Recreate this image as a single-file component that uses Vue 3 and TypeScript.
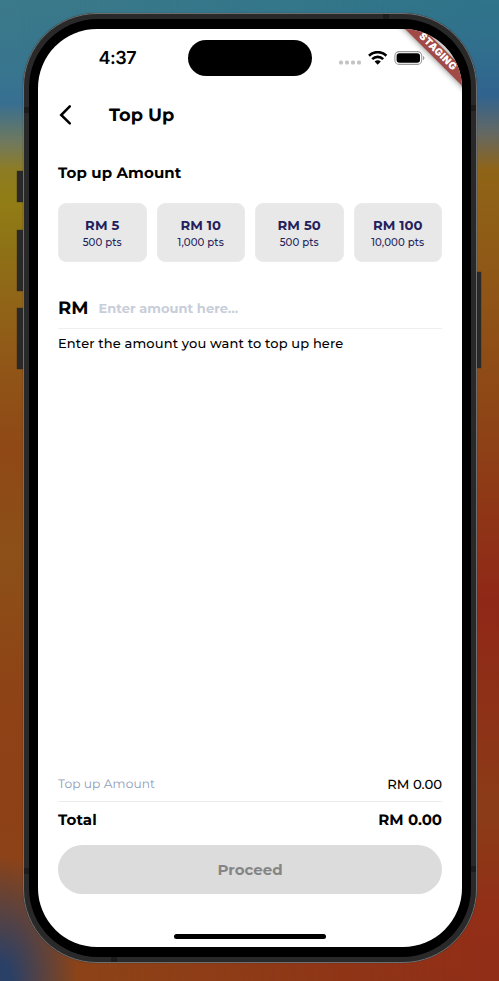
<script setup lang="ts">
import { ref } from 'vue'

interface Preset {
  amount: number
  points: string
}

const presets: Preset[] = [
  { amount: 5, points: '500' },
  { amount: 10, points: '1,000' },
  { amount: 50, points: '500' },
  { amount: 100, points: '10,000' },
]

const entered = ref('')
const total = ref('0.00')
</script>

<template>
  <div class="desktop">
    <i class="side action"></i>
    <i class="side volume-up"></i>
    <i class="side volume-down"></i>
    <i class="side power"></i>
    <div class="frame">
      <i class="seam left-top"></i>
      <i class="seam left-bottom"></i>
      <i class="seam right-top"></i>
      <i class="seam right-bottom"></i>
      <i class="seam top"></i>
      <i class="seam bottom"></i>
      <div class="bezel">
        <div class="screen">
          <header class="status">
            <span class="clock">4:37</span>
            <span class="island"></span>
            <span class="indicators">
              <svg class="cell" width="23" height="5" viewBox="0 0 23 5">
                <g fill="#c4c4c4">
                  <rect x="0" y="0.5" width="4" height="4" rx="1.6" />
                  <rect x="6" y="0.5" width="4" height="4" rx="1.6" />
                  <rect x="12" y="0.5" width="4" height="4" rx="1.6" />
                  <rect x="18" y="0.5" width="4" height="4" rx="1.6" />
                </g>
              </svg>
              <svg class="wifi" width="20" height="15" viewBox="0 0 20 15">
                <g fill="none" stroke="#000" stroke-width="2.6">
                  <path d="M1 4.7a12.4 12.4 0 0 1 17.4 0" />
                  <path d="M4.2 8.1a7.8 7.8 0 0 1 11 0" />
                </g>
                <path d="M6.6 10.6a4.4 4.4 0 0 1 6.2 0L9.7 13.7Z" />
              </svg>
              <svg class="battery" width="31" height="15" viewBox="0 0 31 15">
                <rect x="0.9" y="0.6" width="26.8" height="12.8" rx="4.2" fill="none" stroke="#999" stroke-width="1.1" />
                <rect x="2.6" y="2.2" width="23.4" height="9.6" rx="2.8" />
                <path d="M29 5c1.9.7 1.9 3.5 0 4.2Z" fill="#999" />
              </svg>
            </span>
          </header>
          <div class="banner">STAGING</div>

          <nav class="appbar">
            <svg width="14" height="22" viewBox="0 0 14 22">
              <path d="M11.8 2.4 3.2 11l8.6 8.4" fill="none" stroke="#000" stroke-width="2.5" stroke-linecap="round" />
            </svg>
            <h1>Top Up</h1>
          </nav>

          <main>
            <h2>Top up Amount</h2>
            <div class="presets">
              <button v-for="preset in presets" :key="preset.amount" class="preset">
                <strong>RM {{ preset.amount }}</strong>
                <span>{{ preset.points }} pts</span>
              </button>
            </div>
            <label class="field">
              <span class="currency">RM</span>
              <input v-model="entered" placeholder="Enter amount here..." />
            </label>
            <p class="hint">Enter the amount you want to top up here</p>
          </main>

          <footer>
            <div class="line">
              <span class="line-label">Top up Amount</span>
              <span class="line-value">RM {{ total }}</span>
            </div>
            <div class="total">
              <span class="total-label">Total</span>
              <span class="total-value">RM {{ total }}</span>
            </div>
            <button class="proceed"><span>Proceed</span></button>
            <div class="home"></div>
          </footer>
        </div>
      </div>
    </div>
  </div>
</template>

<style>
body {
  margin: 0;
}
</style>

<style scoped>
.desktop {
  position: relative;
  box-sizing: border-box;
  width: 499px;
  height: 981px;
  padding: 13px 22px 0 23px;
  overflow: hidden;
  font-family: Montserrat, Inter, 'Liberation Sans', sans-serif;
  text-rendering: geometricPrecision;
  color: #000;
  background:
    linear-gradient(180deg, #3b7a8a 0, #38758f 75px, #376f92 103px, #71795c 143px, #8d7c24 170px, #917d15 200px, #8e7116 250px, #906618 295px, #905417 375px, #8f4816 450px, #8c5018 555px, #8e4316 690px, #8e4016 800px, #8c4417 900px, #8c4717 981px);
}

.desktop::before {
  content: '';
  position: absolute;
  inset: 0;
  background:
    radial-gradient(ellipse 110px 60px at 170px 981px, #922f16, rgba(146, 47, 22, 0)),
    linear-gradient(180deg, #2f7489 0, #31708d 45px, #30638f 95px, #646863 133px, #8f6417 170px, #8f5c16 235px, #8f4d16 355px, #8e4016 450px, #902817 600px, #8e3017 700px, #8b3c17 810px, #932e17 920px, #902e17 981px);
  mask-image: linear-gradient(90deg, transparent 20px, #000 480px);
}

.desktop::after {
  content: '';
  position: absolute;
  inset: 0;
  background: radial-gradient(ellipse 78px 126px at 0 981px, #2b4066 15%, rgba(43, 64, 102, 0) 100%);
}

.frame {
  position: relative;
  z-index: 1;
  box-sizing: border-box;
  width: 454px;
  height: 950px;
  padding: 5px;
  border: 1px solid #6e6f70;
  border-radius: 74px;
  background: #292929;
  box-shadow: 0 0 1px #222;
}

.bezel {
  position: relative;
  box-sizing: border-box;
  width: 442px;
  height: 938px;
  padding: 10px 9px;
  border-radius: 69px;
  background: #000;
}

.screen {
  position: relative;
  display: flex;
  flex-direction: column;
  box-sizing: border-box;
  width: 424px;
  height: 918px;
  border-radius: 59px;
  overflow: hidden;
  background: #fff;
}

.side {
  position: absolute;
  width: 7px;
  background: #292929;
  box-shadow: 0 0 1px #222;
}
.action { left: 17px; top: 171px; height: 31px; }
.volume-up { left: 17px; top: 230px; height: 61px; }
.volume-down { left: 17px; top: 308px; height: 61px; }
.power { left: 475px; top: 272px; height: 96px; width: 6px; }

.seam {
  position: absolute;
  background: #1c1c1c;
}
.left-top, .left-bottom { left: 0; width: 5px; height: 6px; }
.right-top, .right-bottom { right: 0; width: 5px; height: 6px; }
.left-top { top: 93px; }
.left-bottom { top: 854px; }
.right-top { top: 91px; }
.right-bottom { top: 852px; }
.top { top: 0; left: 359px; width: 6px; height: 5px; }
.bottom { bottom: 0; left: 87px; width: 6px; height: 5px; }

.status {
  display: grid;
  grid-template-columns: 150px 124px 150px;
  align-items: center;
  height: 58px;
}

.clock {
  padding: 1px 0 0 60.5px;
  font: 600 18px/22px Inter, sans-serif;
  letter-spacing: -0.5px;
}

.island {
  height: 36px;
  border-radius: 18px;
  background: #000;
}

.indicators {
  display: flex;
  align-items: center;
  padding-left: 27px;
}
.cell { margin-top: 9px; }
.wifi { margin-left: 6px; }
.battery { margin-left: 6px; }

.banner {
  position: absolute;
  top: 17px;
  right: -38px;
  width: 124px;
  height: 12.5px;
  transform: rotate(45deg);
  background: #a14a46;
  box-shadow: 0 0 6px rgba(0, 0, 0, 0.55);
  color: #fff;
  font: 900 10px/12.5px Inter, sans-serif;
  letter-spacing: 0.4px;
  text-indent: -1px;
  text-align: center;
}

.appbar {
  display: flex;
  align-items: center;
  height: 56px;
  padding: 0 20px;
}

h1 {
  margin: 1px 0 0 37px;
  font-size: 17.8px;
  line-height: 23px;
  font-weight: 700;
}

main {
  padding: 20px 20px 0;
}

h2 {
  margin: 0;
  font-size: 15px;
  line-height: 20px;
  font-weight: 700;
  letter-spacing: 0.1px;
}

.presets {
  display: grid;
  grid-template-columns: repeat(4, 1fr);
  gap: 10px;
  margin-top: 20px;
}

button {
  border: 0;
  font-family: inherit;
}

.preset {
  display: flex;
  flex-direction: column;
  align-items: center;
  height: 59px;
  padding: 13px 0 0;
  border: 1px solid #ebebeb;
  border-radius: 8px;
  background: #e8e8e8;
  color: #241f5c;
}
.preset strong {
  font-size: 13.2px;
  line-height: 16px;
  font-weight: 700;
  letter-spacing: 0.1px;
}
.preset span {
  margin-top: 3px;
  font-size: 10.2px;
  line-height: 14px;
  font-weight: 500;
  letter-spacing: 0.1px;
}

.field {
  display: flex;
  align-items: center;
  height: 41px;
  margin-top: 25px;
  border-bottom: 1px solid #efefef;
}
.currency {
  width: 40.5px;
  padding-top: 1px;
  font-size: 18px;
  font-weight: 700;
}
input {
  flex: 1;
  min-width: 0;
  padding: 2px 0 0;
  border: 0;
  outline: 0;
  background: none;
  font: 700 13px/20px Montserrat, Inter, sans-serif;
  letter-spacing: 0.02px;
  text-rendering: geometricPrecision;
}
input::placeholder {
  color: #c8ced9;
}

.hint {
  margin: 5px 0 0;
  font-size: 13px;
  line-height: 20px;
  font-weight: 500;
  letter-spacing: 0.14px;
}

footer {
  margin-top: auto;
  padding: 0 20px 8px;
}

.line,
.total {
  display: flex;
  align-items: center;
  justify-content: space-between;
}
.line {
  height: 33px;
  border-bottom: 1px solid #ececec;
  font-size: 13.2px;
}
.line-label {
  color: #8f9bb8;
  font-size: 12.2px;
  letter-spacing: 0.1px;
}
.line-value {
  font-weight: 500;
}
.total {
  height: 35px;
  font-size: 15px;
  font-weight: 700;
}
.total-label {
  letter-spacing: 0.1px;
}

.proceed {
  display: block;
  width: 100%;
  height: 49px;
  margin-top: 8px;
  border-radius: 25px;
  background: #dcdcdc;
  color: #858585;
  font-size: 15px;
  font-weight: 700;
}

.home {
  width: 152px;
  height: 5px;
  margin: 40px auto 0;
  border-radius: 3px;
  background: #000;
}
</style>
